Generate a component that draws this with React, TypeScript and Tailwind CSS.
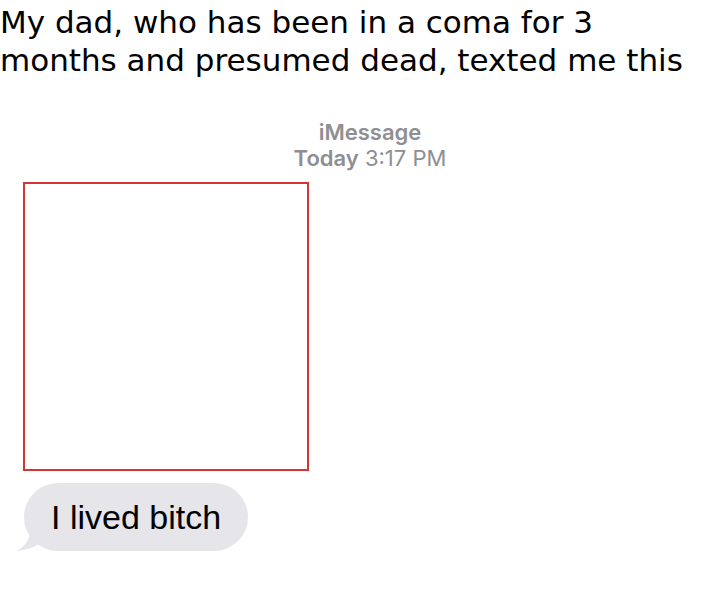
export default function App() {
    return (
        <div className="w-[704px] h-[589px] bg-white overflow-hidden">
            <h1 className="pt-[3px] text-[31px] leading-[38px] text-black font-['DejaVu_Sans',sans-serif] font-normal">
                My dad, who has been in a coma for 3
                <br />
                months and presumed dead, texted me this
            </h1>
            <div className="mt-[40px] pl-[270px] w-[470px] text-center text-[22px] leading-[26px] text-[#8e8e93] font-['Inter',sans-serif]">
                <div className="font-semibold">iMessage</div>
                <div>
                    <span className="font-semibold">Today</span> 3:17 PM
                </div>
            </div>
            <div className="ml-[23px] mt-[11px] w-[286px] h-[289px] border-2 border-[#d63333]" />
            <div className="relative ml-[24px] mt-[12px] inline-flex items-center h-[68px] px-[27px] rounded-[34px] bg-[#e5e5ea] text-[34px] text-black font-['Liberation_Sans',Arial,sans-serif]">
                <svg
                    className="absolute left-[-7px] bottom-0"
                    width="30"
                    height="26"
                    viewBox="0 0 30 26"
                >
                    <path d="M14 0 C14 12 10 20 0 26 C10 25 19 22 26 16 L30 0 Z" fill="#e5e5ea" />
                </svg>
                <span className="relative">I lived bitch</span>
            </div>
        </div>
    );
}
